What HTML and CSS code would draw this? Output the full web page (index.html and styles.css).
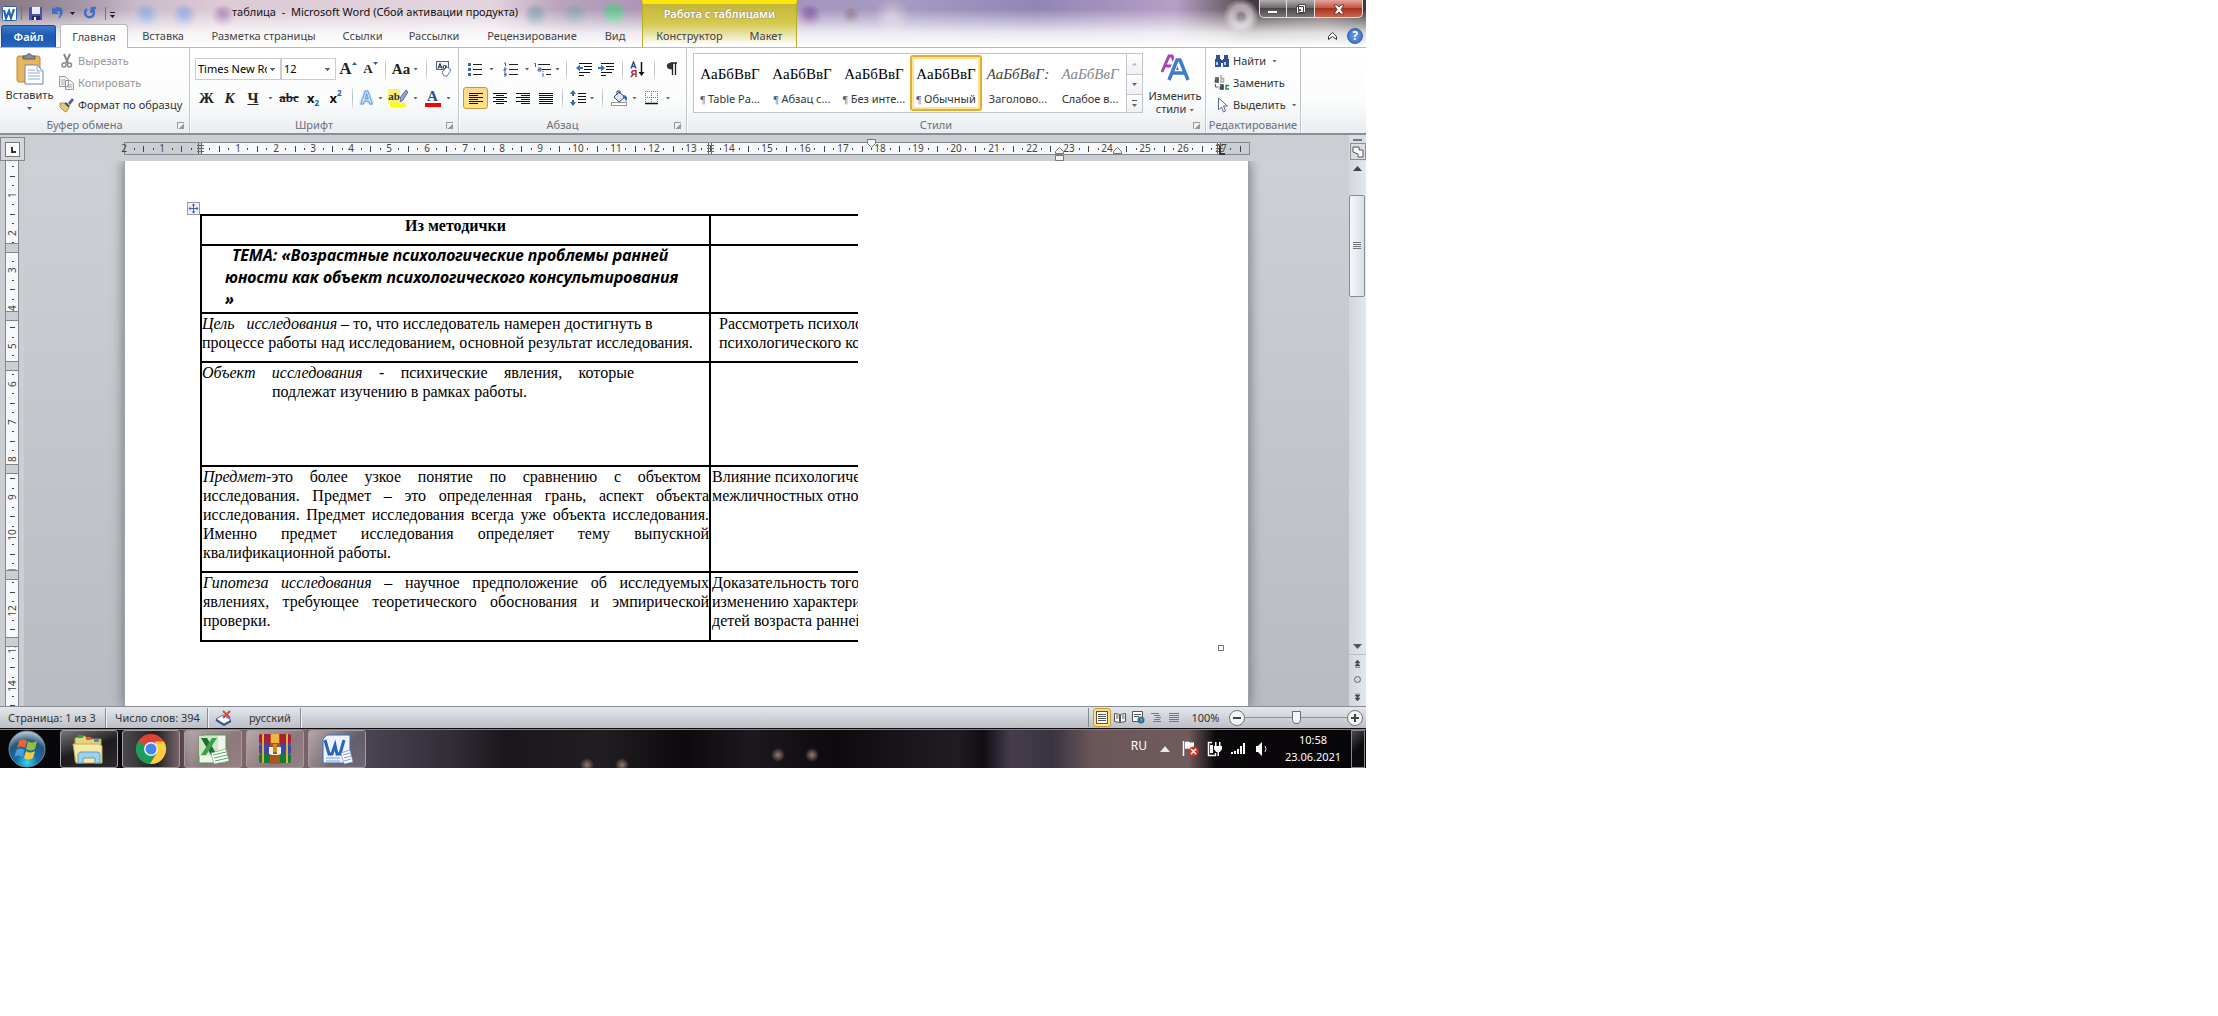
FILE: index.html
```html
<!DOCTYPE html>
<html lang="ru">
<head>
<meta charset="utf-8">
<title>таблица - Microsoft Word</title>
<link rel="stylesheet" href="styles.css">
</head>
<body>
<div class="window">
  <header class="head">
    <div class="titlebar">
      <svg class="qat" width="120" height="20" viewBox="0 0 120 20">
        <rect x="2.500" y="4.500" width="14" height="14" rx="1" fill="#fff" stroke="#2c62ae"/>
        <path d="M4 8l2 8 3-7 2 7 3-9" fill="none" stroke="#2467b9" stroke-width="2.200"/>
        <path d="M21.500 5v13M105.500 5v13" stroke="#77717f"/>
        <path d="M30 5h12v13H29V6z" fill="#4a4fb5"/><path d="M32 5h8v7h-8z" fill="#e9effa"/><path d="M32 14h8v4h-8z" fill="#252b72"/><path d="M34 15h2v3h-2z" fill="#fff"/>
        <path d="M52 5v7h7l-2.500-2.500c3-2 5 1 1.500 7.500 7-4 6-13-1-12-1.500.200-2.500 1-3 2z" fill="#3e6fc4"/>
        <path d="M70 10h5l-2.500 3zM110 13h5l-2.500 3zM110 10h5v1h-5z" fill="#1b1b1b"/>
        <path d="M87 7a4.500 4.500 0 1 0 5 0M91 11l1-5h4" fill="none" stroke="#3e6fc4" stroke-width="2.400"/>
      </svg>
      <span class="title">таблица&nbsp; -&nbsp; Microsoft Word (Сбой активации продукта)</span>
    </div>
    <nav class="tabs">
      <button class="tab file">Файл</button>
      <button class="tab active">Главная</button>
      <button class="tab">Вставка</button>
      <button class="tab">Разметка страницы</button>
      <button class="tab">Ссылки</button>
      <button class="tab">Рассылки</button>
      <button class="tab">Рецензирование</button>
      <button class="tab">Вид</button>
    </nav>
    <div class="context">
      <div class="context-title">Работа с таблицами</div>
      <div class="context-tabs"><button class="tab">Конструктор</button><button class="tab">Макет</button></div>
    </div>
    <div class="winbtns">
      <button aria-label="Свернуть"><svg width="14" height="14"><path d="M1.500 8.500h10v3h-10z" fill="#fff" stroke="#555"/></svg></button>
      <button aria-label="Развернуть"><svg width="14" height="14"><path d="M4.500 2.500h7v8h-7zM2.500 4.500h7v7h-7z" fill="#fff" stroke="#444"/><path d="M5 7h2v2H5z" fill="#555"/></svg></button>
      <button class="close" aria-label="Закрыть"><svg width="14" height="14"><path d="M2 3h3l2 2 2-2h3L9 7.500l3 4.500H9L7 10l-2 2H2l3-4.500z" fill="#fff" stroke="#5b2222" stroke-width=".8"/></svg></button>
    </div>
    <div class="helprow">
      <button aria-label="Свернуть ленту"><svg width="10" height="8"><path d="M.5 4.500l4-4 4 4v3l-4-3-4 3z" fill="#fff" stroke="#333"/></svg></button>
      <button class="help" aria-label="Справка">?</button>
    </div>
  </header>

  <section class="ribbon">
    <div class="group g-clip">
      <div class="clip">
        <button class="paste">
          <svg width="28" height="32" viewBox="0 0 28 32"><rect x="1" y="3" width="23" height="26" rx="2" fill="#e9b45c" stroke="#c2883a"/><path d="M7 6V3h3c1-3 5-3 6 0h3v3z" fill="#888f9a" stroke="#5c6069"/><path d="M9 12h12l6 6v13H9z" fill="#fff" stroke="#6c86b4"/><path d="M21 12v6h6M12 17h7M12 20h12M12 23h12M12 26h12" fill="none" stroke="#92abd4"/></svg>
          <span>Вставить</span><i class="arr"></i>
        </button>
        <div class="cliplist">
          <button class="off"><svg width="16" height="16"><path d="M5 1l4 9M11 1L7 10" stroke="#8a8a8a" stroke-width="2"/><circle cx="5" cy="12" r="2" fill="none" stroke="#8a8a8a" stroke-width="1.500"/><circle cx="10.500" cy="12" r="2" fill="none" stroke="#8a8a8a" stroke-width="1.500"/></svg>Вырезать</button>
          <button class="off"><svg width="16" height="16"><path d="M.5 1.500h6l3 3v7h-9zM6.500 5.500h5l3 3v6h-8z" fill="#f4f4f4" stroke="#999"/><path d="M2 5h5M2 7h4M2 9h4M8 10h5M8 12h5" stroke="#aaa"/></svg>Копировать</button>
          <button><svg width="16" height="16"><path d="M9 6l4-5 2 2-4 5z" fill="#5a5f9c"/><path d="M7 5l4 4-2 2-5-4z" fill="#555"/><path d="M1 6l4 0 5 5-3 4-2-1-4-4z" fill="#e8c878" stroke="#987528" stroke-width=".7"/></svg>Формат по образцу</button>
        </div>
      </div>
      <div class="glabel">Буфер обмена<i class="launch"></i></div>
    </div>

    <div class="group g-font">
      <div class="rows">
        <div class="row f1">
          <select aria-label="Шрифт"><option>Times New Roman</option></select>
          <select aria-label="Размер"><option>12</option></select>
          <button class="serif big">A<svg class="tip" width="5" height="4"><path d="M0 3h5L2.500 0z" fill="#3058a8"/></svg></button>
          <button class="serif mid">A<svg class="tip" width="5" height="4"><path d="M0 0h5L2.500 3z" fill="#3058a8"/></svg></button>
          <i class="sep"></i>
          <button class="serif">Aa<i class="arr"></i></button>
          <i class="sep"></i>
          <button aria-label="Очистить формат"><svg width="18" height="16"><rect x="1.500" y=".5" width="12" height="8" fill="#eef2fb" stroke="#4a66a0"/><path d="M3 7.500l2-5 2 5M4 6h2M11 4.500v3M11 6a1.500 1.500 0 1 0-3 0 1.500 1.500 0 1 0 3 0" fill="none" stroke="#222"/><path d="M7 11l5-5 4 3-4 6H9z" fill="#fff" stroke="#6b7898"/></svg></button>
        </div>
        <div class="row f2">
          <button class="serif">Ж</button>
          <button class="serif it">К</button>
          <button class="serif un">Ч</button>
          <i class="arr"></i>
          <button class="serif strike">abc</button>
          <button class="xx">x<sub>2</sub></button>
          <button class="xx">x<sup>2</sup></button>
          <i class="sep"></i>
          <button class="glow">A</button>
          <i class="arr"></i>
          <button class="bar yellow"><b>ab</b><svg width="8" height="12"><path d="M6 0l2 2-5 8-3 2V8z" fill="#8fa9d8" stroke="#33415f" stroke-width=".7"/></svg></button>
          <i class="arr"></i>
          <button class="bar red">A</button>
          <i class="arr"></i>
        </div>
      </div>
      <div class="glabel">Шрифт<i class="launch"></i></div>
    </div>

    <div class="group g-par">
      <div class="rows">
        <div class="row p1">
          <button aria-label="Маркеры"><svg width="14" height="14"><path d="M5 2.500h9M5 7.500h9M5 12.500h9" stroke="#222"/><path d="M0 1h3v3H0zM0 6h3v3H0zM0 11h3v3H0z" fill="#3b63b5"/></svg></button><i class="arr"></i>
          <button aria-label="Нумерация"><svg width="15" height="15"><path d="M6 2.500h9M6 7.500h9M6 12.500h9" stroke="#222"/><path d="M1 1h1.500v3M1 6h2v1.500H1V9h2M1 11h2v3H1M1 12.500h2" fill="none" stroke="#3b63b5"/></svg></button><i class="arr"></i>
          <button aria-label="Многоуровневый список"><svg width="17" height="15"><path d="M4 2.500h12M8 7.500h9M12 12.500h5" stroke="#222"/><path d="M0 1.500h1.500V5M4 6h3v3H4V7.500h3M9 9v1M9 11v4" fill="none" stroke="#3b63b5"/></svg></button><i class="arr"></i>
          <i class="sep"></i>
          <button aria-label="Уменьшить отступ"><svg width="16" height="14"><path d="M3 1.500h13M8 4.500h8M8 7.500h8M3 10.500h11M3 13.500h5" stroke="#111"/><path d="M0 6l4-3.500v2.500h3v2H4v2.500z" fill="#3b6fd0"/></svg></button>
          <button aria-label="Увеличить отступ"><svg width="16" height="14"><path d="M3 1.500h13M8 4.500h8M8 7.500h8M3 10.500h11M3 13.500h5" stroke="#111"/><path d="M7 6L3 2.500v2.500H0v2h3v2.500z" fill="#3b6fd0"/></svg></button>
          <i class="sep"></i>
          <button aria-label="Сортировка"><svg width="16" height="17"><path d="M1 7.500L3.500 1l2.500 6.500M2 5.500h3" fill="none" stroke="#2b4c9b" stroke-width="1.400"/><path d="M6 16V9.700H3.500a1.700 1.700 0 0 0 0 3.400H6M3.500 13L1 16" fill="none" stroke="#9c2d35" stroke-width="1.400"/><path d="M11.500 1v12" stroke="#111" stroke-width="1.500"/><path d="M8.500 11h6l-3 4z" fill="#111"/></svg></button>
          <i class="sep"></i>
          <button aria-label="Знаки абзаца"><svg width="11" height="14"><path d="M5 1h6M6.500 1v12M9.500 1v12" stroke="#222" stroke-width="1.300"/><path d="M6 .5v7c-7 0-7-7 0-7z" fill="#333"/></svg></button>
        </div>
        <div class="row p2">
          <button class="on" aria-label="По левому краю"><svg width="14" height="12"><path d="M0 1.500h14M0 3.500h9M0 5.500h14M0 7.500h9M0 9.500h14M0 11.500h9" stroke="#111"/></svg></button>
          <button aria-label="По центру"><svg width="14" height="12"><path d="M0 1.500h14M3 3.500h8M0 5.500h14M3 7.500h8M0 9.500h14M3 11.500h8" stroke="#111"/></svg></button>
          <button aria-label="По правому краю"><svg width="14" height="12"><path d="M0 1.500h14M5 3.500h9M0 5.500h14M5 7.500h9M0 9.500h14M5 11.500h9" stroke="#111"/></svg></button>
          <button aria-label="По ширине"><svg width="14" height="12"><path d="M0 1.500h14M0 3.500h14M0 5.500h14M0 7.500h14M0 9.500h14M0 11.500h14" stroke="#111"/></svg></button>
          <i class="sep"></i>
          <button aria-label="Интервал"><svg width="16" height="16"><path d="M8 3.500h8M8 6.500h8M8 9.500h8M8 12.500h8" stroke="#111"/><path d="M3 0l3 4H0zM3 16l3-4H0zM2 4h2v2H2zM2 10h2v2H2z" fill="#3b63b5"/></svg></button><i class="arr"></i>
          <i class="sep"></i>
          <button aria-label="Заливка"><svg width="17" height="16"><path d="M3 7l5-5 6 5-6 5z" fill="#dbe6f7" stroke="#33486f"/><path d="M6 5V1h3v3" fill="none" stroke="#33486f"/><path d="M12 5c4 0 5 3 3 7-1-3-1-4-3-4z" fill="#3b63b5"/><rect x=".5" y="12.500" width="15" height="3" fill="#fff" stroke="#999"/></svg></button><i class="arr"></i>
          <button aria-label="Границы"><svg width="14" height="14"><path d="M.5 0v13M12.500 0v13M6.500 0v13M0 .5h13M0 6.500h13" stroke="#777" stroke-dasharray="1 1"/><path d="M0 12.500h13" stroke="#111" stroke-width="1.500"/></svg></button><i class="arr"></i>
        </div>
      </div>
      <div class="glabel">Абзац<i class="launch"></i></div>
    </div>

    <div class="group g-style">
      <div class="stylebox">
        <div class="gallery">
          <button class="sty"><b>АаБбВвГ</b><span><em>¶</em> Table Pa...</span></button>
          <button class="sty"><b>АаБбВвГ</b><span><em>¶</em> Абзац с...</span></button>
          <button class="sty"><b>АаБбВвГ</b><span><em>¶</em> Без инте...</span></button>
          <button class="sty sel"><b>АаБбВвГ</b><span><em>¶</em> Обычный</span></button>
          <button class="sty h"><b>АаБбВвГ:</b><span>Заголово...</span></button>
          <button class="sty w"><b>АаБбВвГ</b><span>Слабое в...</span></button>
          <div class="gscroll">
            <button class="dis" aria-label="Вверх"><i class="arr up"></i></button>
            <button aria-label="Вниз"><i class="arr"></i></button>
            <button aria-label="Ещё"><i class="dash"></i><i class="arr"></i></button>
          </div>
        </div>
        <button class="change">
          <svg width="30" height="28" viewBox="0 0 30 28"><path d="M2 18L9 2h3l6 16M5 12h10" fill="none" stroke="#a844b4" stroke-width="3"/><path d="M9 26l8-21h3l8 21M12 19h12" fill="none" stroke="#fff" stroke-width="6"/><path d="M9 26l8-20h3l8 20M12 19h12" fill="none" stroke="#3f7ccb" stroke-width="3.500"/></svg>
          <span>Изменить</span><span>стили <i class="arr"></i></span>
        </button>
      </div>
      <div class="glabel">Стили<i class="launch"></i></div>
    </div>

    <div class="group g-edit">
      <div class="cliplist">
        <button><svg width="16" height="14"><path d="M2 1h4v4H2zM10 1h4v4h-4zM1 5h6v8H1zM9 5h6v8H9zM7 6h2v3H7z" fill="#2c4f96"/><path d="M2 8h2v3H2zM10 8h2v3h-2z" fill="#b9cdf0"/></svg>Найти <i class="arr"></i></button>
        <button><svg width="16" height="16"><g fill="none" stroke-width="1.500"><path d="M1 3h3v4H1.500V5H4" stroke="#444"/><path d="M7 0v7h2.500V3.500H7" stroke="#aaa"/><path d="M6 10h3v4H6.500v-2H9" stroke="#333"/><path d="M15 10.500h-3V14h3" stroke="#2a8a34"/></g><path d="M1.500 9v3h3" fill="none" stroke="#3b63b5"/></svg>Заменить</button>
        <button><svg width="16" height="16"><path d="M4.500 1v12l3-3 2 5 2-1-2-5h4z" fill="#fff" stroke="#5a6a8c"/></svg>Выделить <i class="arr"></i></button>
      </div>
      <div class="glabel">Редактирование</div>
    </div>
  </section>

  <div class="rulerbar">
    <button class="tabsel" aria-label="Табуляция"><i></i></button>
    <svg class="hruler" width="1132" height="27" id="hruler"></svg>
    <div class="rightcap"><i></i><button aria-label="Линейка"><svg width="12" height="12"><path d="M1 1h6v3h4v7H6V8L1 6z" fill="#fff" stroke="#555"/></svg></button></div>
  </div>

  <main class="work">
    <svg class="vruler" width="19" height="545" id="vruler"></svg>
    <div class="canvas">
      <div class="page">
        <div class="anchor"><svg width="13" height="13"><rect x=".5" y=".5" width="12" height="12" fill="#f0f2f6" stroke="#999"/><path d="M6.500 2v9M2 6.500h9" stroke="#3b63b5"/><path d="M6.500 1.500l2 2h-4zM6.500 11.500l2-2h-4zM1.500 6.500l2-2v4zM11.500 6.500l-2-2v4z" fill="#3b63b5"/></svg></div>
        <div class="clipbox">
          <table class="doc">
            <colgroup><col class="c1"><col class="c2"></colgroup>
            <tr class="r1"><th>Из методички</th><td></td></tr>
            <tr class="r2"><td><div class="theme"><p class="first">ТЕМА: «Возрастные психологические проблемы ранней</p><p>юности как объект психологического консультирования</p><p>»</p></div></td><td></td></tr>
            <tr class="r3"><td><p><em>Цель&nbsp;&nbsp; исследования</em> – то, что исследователь намерен достигнуть в</p><p>процессе работы над исследованием, основной результат исследования.</p></td><td><p class="in">Рассмотреть психоло</p><p class="in">психологического ко</p></td></tr>
            <tr class="r4"><td><p class="j narrow"><em>Объект исследования</em> - психические явления, которые</p><p class="hang">подлежат изучению в рамках работы.</p></td><td></td></tr>
            <tr class="r5"><td><p class="j short"><em>Предмет</em>-это более узкое понятие по сравнению с объектом</p><p class="j">исследования. Предмет – это определенная грань, аспект объекта</p><p class="j">исследования. Предмет исследования всегда уже объекта исследования.</p><p class="j">Именно предмет исследования определяет тему выпускной</p><p>квалификационной работы.</p></td><td><p>Влияние психологиче</p><p>межличностных отно</p></td></tr>
            <tr class="r6"><td><p class="j"><em>Гипотеза исследования</em> – научное предположение об исследуемых</p><p class="j">явлениях, требующее теоретического обоснования и эмпирической</p><p>проверки.</p></td><td><p>Доказательность того</p><p>изменению характери</p><p>детей возраста ранней</p></td></tr>
          </table>
        </div>
        <i class="endmark"></i>
      </div>
    </div>
    <div class="vscroll">
      <svg width="17" height="34"><path d="M4 10h9L8.500 5z" fill="#444"/></svg>
      <div class="thumb"><i></i></div>
      <svg class="down" width="17" height="66"><path d="M4 4h9l-4.500 5z" fill="#555"/><path d="M0 14.500h17" stroke="#b9bfc9"/><path d="M6 23h5L8.500 20zM6 26h5L8.500 23zM6 27.500h5" fill="#444" stroke="#444" stroke-width=".5"/><circle cx="8.500" cy="39.500" r="3" fill="#d5d9df" stroke="#666"/><path d="M6 55h5l-2.500 3zM6 58h5l-2.500 3zM6 54h5" fill="#444" stroke="#444" stroke-width=".5"/></svg>
    </div>
  </main>

  <footer class="status">
    <span class="st s1">Страница: 1 из 3</span>
    <span class="st s2">Число слов: 394</span>
    <span class="st s3"><svg width="18" height="16"><path d="M1 9l7-4 8 5-7 4z" fill="#fff" stroke="#4a66a8"/><path d="M1 10l8 5 7-4" fill="none" stroke="#3556a0" stroke-width="2"/><path d="M8 1l7 7M15 1L8 8" stroke="#e2442c" stroke-width="2"/></svg>русский</span>
    <div class="views">
      <button class="on" aria-label="Разметка"><svg width="13" height="13"><rect x=".5" y=".5" width="11" height="12" fill="#fff" stroke="#555"/><path d="M2 3.500h8M2 5.500h8M2 7.500h8M2 9.500h8" stroke="#555"/></svg></button>
      <button aria-label="Чтение"><svg width="13" height="12"><path d="M.5 1.500l5 1v8l-5-1zM11.500 1.500l-5 1v8l5-1z" fill="#fff" stroke="#555"/><path d="M2 4h2.500M2 6h2.500M8 4h2.500M8 6h2.500" stroke="#555"/></svg></button>
      <button aria-label="Веб"><svg width="13" height="13"><path d="M.5.5h10v10H.5z" fill="#fff" stroke="#555"/><path d="M2 3.500h7M2 5.500h5" stroke="#555"/><circle cx="9" cy="9" r="3.500" fill="#2e70a8"/><path d="M8 7l3 1-2 3z" fill="#6bb26a"/></svg></button>
      <button aria-label="Структура"><svg width="11" height="10"><path d="M0 .5h8M3 2.500h6M5 4.500h5M3 6.500h6M2 8.500h8" stroke="#777"/></svg></button>
      <button aria-label="Черновик"><svg width="11" height="10"><path d="M0 .5h10M0 2.500h10M0 4.500h10M0 6.500h10M0 8.500h10" stroke="#777"/></svg></button>
    </div>
    <span class="pct">100%</span>
    <div class="zoom">
      <button aria-label="Уменьшить"><i></i></button>
      <input type="range" min="0" max="100" value="50" aria-label="Масштаб">
      <button class="plus" aria-label="Увеличить"><i></i></button>
    </div>
  </footer>

  <div class="taskbar">
    <button class="start" aria-label="Пуск"><svg width="38" height="38" viewBox="0 0 38 38"><defs><radialGradient id="orb" cx="50%" cy="88%" r="85%"><stop offset="0" stop-color="#35d8f8"/><stop offset=".35" stop-color="#1570a8"/><stop offset=".7" stop-color="#27557c"/><stop offset="1" stop-color="#b4c8d4"/></radialGradient></defs><circle cx="19" cy="19" r="18" fill="url(#orb)" stroke="#6d8ea2"/><path d="M11 11c3-2 5-2 8 0l-2 7c-3-2-5-2-8 0z" fill="#ea6430"/><path d="M20 11c3 2 5 2 9 0l-2 8c-3 2-6 2-9 0z" fill="#92bf3e"/><path d="M8.500 20c3-2 5-2 8 0l-2 7c-3-2-5-2-8 0z" fill="#4d9ddc"/><path d="M18 21c3 2 5 2 9 0l-2 7c-3 2-6 2-9 0z" fill="#fbc937"/></svg></button>
    <button class="task dark" aria-label="Проводник"><svg width="34" height="34" viewBox="0 0 34 34"><path d="M3 6l10-2 2 3h14v22H3z" fill="#e9d27c" stroke="#b79b45"/><path d="M1 12h26l3 2v17H4z" fill="#f7e9a8" stroke="#c6ab56"/><path d="M6 3h5v3H6z" fill="#22a847"/><path d="M14 5h5v3h-5z" fill="#e35c2c"/><path d="M22 7h5v3h-5z" fill="#3b8fdc"/><path d="M6 31v-9q1-2 3-2h16q3 0 3 2v9h-5v-5H11v5z" fill="#9bd3ee" stroke="#5d9fbe"/></svg></button>
    <button class="task half" aria-label="Chrome"><svg width="32" height="32" viewBox="0 0 32 32"><circle cx="16" cy="16" r="15" fill="#dc4437"/><path d="M3 8.500A15 15 0 0 0 15 31l7-12-6-3z" fill="#1a9f5b"/><path d="M29 8.500A15 15 0 0 1 15 31l7-11.500L20 8.500z" fill="#fdce41"/><circle cx="16" cy="16" r="7" fill="#f1f1f1"/><circle cx="16" cy="16" r="5.500" fill="#4485f2"/></svg></button>
    <button class="task" aria-label="Excel"><svg width="32" height="32" viewBox="0 0 32 32"><path d="M6 2h23v28H2V6z" fill="#eef6ea" stroke="#4a9a4c"/><path d="M2 3h19v20H2z" fill="#cfe7c6"/><path d="M4 5h6l10 17h-6z" fill="#1c6f2e"/><path d="M20 5h-5L4 22h5z" fill="#3da14a"/><path d="M14 20l15-4 3 12-15 3z" fill="#fff" stroke="#6ca070" stroke-width=".7"/><path d="M16 22l13-3M17 25l13-3M18 28l13-3" stroke="#5aa35e"/></svg></button>
    <button class="task" aria-label="WinRAR"><svg width="32" height="32" viewBox="0 0 32 32"><rect y="1" width="32" height="10" rx="2" fill="#a81f3c"/><rect y="11" width="32" height="10" rx="2" fill="#4145a8"/><rect y="21" width="32" height="9" rx="2" fill="#15793a"/><path d="M3 1h2v29H3zM27 1h2v29h-2z" fill="#d9b23d"/><path d="M11 1h10v30H11z" fill="#a95621"/><path d="M12 1h8v9h-8z" fill="#f0b540"/><path d="M10 14h4v7h4v-7h4v7l-3 1h-6l-3-1z" fill="#f4f0e6"/><path d="M14 11h4v8h-4z" fill="#cf8a28"/></svg></button>
    <button class="task blue" aria-label="Word"><svg width="32" height="32" viewBox="0 0 32 32"><path d="M6 2h23v28H2V6z" fill="#eef3fb" stroke="#3c6db5"/><path d="M4 7l4 14h3l3-9 2 9h3l4-14" fill="none" stroke="#2564b8" stroke-width="3"/><path d="M20 20l9-3 3 12-9 2z" fill="#fff" stroke="#6c8ac0" stroke-width=".7"/><path d="M22 22l7-2M23 25l7-2M23 28l7-2M5 25h14M5 28h14" stroke="#7ba0d8"/></svg></button>
    <div class="tray">
      <span class="lang">RU</span>
      <svg class="more" width="10" height="6"><path d="M0 6h10L5 0z" fill="#e8e8e8"/></svg>
      <svg width="17" height="17"><path d="M1.500 1v15" stroke="#fff" stroke-width="1.500"/><path d="M3 2c4-2 5 2 9 0v7c-4 2-5-2-9 0z" fill="#fff"/><circle cx="11.500" cy="11.500" r="5" fill="#d8302a"/><path d="M9 9l5 5M14 9l-5 5" stroke="#fff" stroke-width="1.500"/></svg>
      <svg width="16" height="16"><path d="M5 1.500H1.500v13h7V12" fill="none" stroke="#fff" stroke-width="1.500"/><path d="M3 4h3v8H3z" fill="#fff"/><path d="M7 5h8v3l-2 3H9L7 8zM8 1h1.500v4H8zM12 1h1.500v4H12zM10.500 11h1.500v4h-1.500z" fill="#fff"/></svg>
      <svg width="16" height="13"><path d="M0 10h2v2H0zM3 9h2v3H3zM6 7h2v5H6zM9 4h2v8H9zM12 1h2v11h-2z" fill="#fff"/></svg>
      <svg width="16" height="16"><path d="M1 5h2l4-4v14l-4-4H1z" fill="#fff"/><path d="M10 5q2 3 0 6" fill="none" stroke="#ddd"/></svg>
      <div class="clock"><span>10:58</span><span>23.06.2021</span></div>
      <button class="desk" aria-label="Показать рабочий стол"></button>
    </div>
  </div>
</div>
<script src="rulers.js"></script>
</body>
</html>
```
FILE: styles.css
```css
* { box-sizing: border-box; }
body { margin: 0; background: #fff; color: #333; font: 11px/16px "Noto Sans", "Open Sans", sans-serif; }
button { margin: 0; padding: 0; border: 0; background: none; color: inherit; font: inherit; display: flex; align-items: center; justify-content: center; white-space: nowrap; }
svg { display: block; flex: none; }
p { margin: 0; }
.window { width: 100%; max-width: 1366px; overflow: hidden; }

.head {
  display: grid; grid-template: 24px 23px / 642px 155px 1fr; border-bottom: 1px solid #b6babf;
  background:
    linear-gradient(#fff0 20%, #fffc 70%, #fff 100%),
    radial-gradient(circle 7px at 1241px 17px, #6f6670 40%, #6f667000),
    radial-gradient(circle 18px at 1241px 16px, #b3a6b0 60%, #b3a6b000),
    radial-gradient(circle 13px at 146px 16px, #8fa7dd 20%, #8fa7dd00),
    radial-gradient(circle 13px at 184px 16px, #8fa7dd 20%, #8fa7dd00),
    radial-gradient(circle 12px at 223px 16px, #ab83ba 20%, #ab83ba00),
    radial-gradient(circle 13px at 536px 16px, #8b9fb0 30%, #8b9fb000),
    radial-gradient(circle 13px at 575px 16px, #8b9fb0 30%, #8b9fb000),
    radial-gradient(circle 13px at 614px 14px, #69bd91 50%, #69bd9100),
    radial-gradient(circle 12px at 810px 16px, #8055a0 20%, #8055a000),
    radial-gradient(circle 9px at 851px 16px, #8c6f8a 20%, #8c6f8a00),
    radial-gradient(circle 18px at 892px 16px, #c8bbd2 20%, #c8bbd200),
    linear-gradient(90deg, #857783, #a595a8 6%, #c9bac9 10%, #dccad5 16%, #e3d5df 36%, #b9a3bd 41%, #a68fb3 50%, #a59bc4 66%, #9185b5 76%, #b79fc6 86%, #6b6068 90%, #3c3539 91%, #6e6264 97%, #3b3739);
}
.titlebar { display: flex; align-items: center; }
.title { margin-left: 112px; color: #111; white-space: nowrap; }
.tabs { display: grid; grid-template-columns: 56px 68px 70px 131px 67px 76px 120px 46px; grid-row: 2; }
.tab { color: #444; }
.file { margin: 1px 0 0 1px; background: linear-gradient(#3a78cf, #1c58ae 50%, #2567c2); color: #fff; border: 1px solid #1c4a94; border-bottom: 0; border-radius: 3px 3px 0 0; font-weight: 600; }
.tabs .active { margin: 0 0 -1px 4px; width: 68px; background: #fff; border: 1px solid #b6babf; border-bottom: 0; border-radius: 3px 3px 0 0; z-index: 1; }
.tabs .tab:nth-child(n+3) { margin-left: 8px; }
.context { grid-column: 2; grid-row: 1 / 3; border: solid #b5ab2e; border-width: 0 1px; border-top: 4px solid #fde70c; background: linear-gradient(#c4b63b, #d6c94f 45%, #fffc 95%); }
.context-title { height: 20px; line-height: 20px; text-align: center; color: #fff; font-weight: 600; text-shadow: 0 0 2px #777; }
.context-tabs { display: grid; grid-template-columns: 93px 60px; height: 23px; }
.winbtns { grid-column: 3; grid-row: 1; display: flex; justify-self: end; margin-right: 3px; height: 18px; }
.winbtns button { width: 28px; border: 1px solid #ddd; border-top: 0; background: linear-gradient(#b3aeb0, #6e696b 45%, #4a4547 50%, #7a7577); border-radius: 0 0 0 5px; }
.winbtns button + button { border-left: 0; border-radius: 0; }
.winbtns .close { width: 48px; background: linear-gradient(#e2a69b, #c45646 45%, #a9301c 50%, #cc6650); border-radius: 0 0 5px 0; }
.helprow { grid-column: 3; grid-row: 2; display: flex; justify-content: flex-end; align-items: center; gap: 9px; padding-right: 3px; }
.help { width: 16px; height: 16px; border-radius: 50%; background: radial-gradient(#6d9ee6, #2e64bd); color: #fff; font-weight: 700; font-size: 12px; border: 1px solid #2f5ea8; }

.ribbon { display: flex; height: 87px; border-bottom: 2px solid #8a8f95; background: linear-gradient(#fff, #fbfcfc 60%, #eceff2 95%); }
.group { display: flex; flex-direction: column; justify-content: space-between; border-right: 1px solid #c3c7cc; box-shadow: 1px 0 #fff; }
.g-clip { width: 190px; }
.g-font { width: 269px; }
.g-par { width: 228px; }
.g-style { width: 519px; }
.g-edit { width: 95px; }
.glabel { position: relative; height: 18px; line-height: 20px; text-align: center; color: #6b6f7a; padding-right: 20px; white-space: nowrap; }
.g-edit .glabel { padding: 0; }
.launch { position: absolute; right: 5px; top: 7px; width: 7px; height: 7px; border: solid #999; border-width: 1px 0 0 1px; background: linear-gradient(135deg, #fff0 55%, #999 55%); }
.arr { display: inline-block; width: 5px; height: 3px; background: #666; clip-path: polygon(0 0, 100% 0, 50% 100%); flex: none; align-self: center; justify-self: center; vertical-align: middle; }
.arr.up { clip-path: polygon(0 100%, 100% 100%, 50% 0); }
.sep { width: 1px; height: 20px; background: linear-gradient(#dfe2e6, #b5bac2, #dfe2e6); justify-self: center; align-self: center; }
.clip { display: flex; padding-top: 5px; }
.paste { flex-direction: column; justify-content: flex-start; width: 59px; }
.paste span { margin: 2px 0 4px; }
.cliplist { display: flex; flex-direction: column; gap: 6px; }
.cliplist button { justify-content: flex-start; gap: 3px; height: 16px; }
.off { color: #999; }
.g-edit .cliplist { padding: 5px 0 0 8px; }
.g-edit .arr { margin-left: 3px; }
.rows { display: flex; flex-direction: column; gap: 7px; padding: 10px 0 0 5px; }
.g-par .rows { padding-left: 4px; }
.row { display: grid; height: 22px; }
.f1 { grid-template-columns: 86px 55px 24px 21px 9px 30px 12px 24px; }
.f2 { grid-template-columns: 23px 23px 24px 11px 26px 22px 23px 10px 19px 9px 26px 9px 25px 7px; }
.p1 { grid-template-columns: 24px 9px 28px 6px 25px 5px 13px 22px 22px 10px 21px 13px 20px; }
.p2 { grid-template-columns: 25px 23px 23px 23px 10px 21px 8px 12px 22px 9px 25px 8px; }
select { appearance: none; margin: 0; width: 100%; height: 22px; padding: 0 13px 0 2px; border: 1px solid #c9ccd1; border-radius: 0; font: inherit; color: #000; text-overflow: clip; background: linear-gradient(#666, #666) right 5px top 9px / 5px 1px no-repeat, linear-gradient(#666, #666) right 6px top 10px / 3px 1px no-repeat, linear-gradient(#666, #666) right 7px top 11px / 1px 1px no-repeat, #fff; }
.serif { font: 700 15px/20px "Liberation Serif", serif; color: #222; gap: 3px; }
.big { font-size: 17px; gap: 0; }
.mid { font-size: 13px; gap: 0; }
.tip { align-self: flex-start; margin-top: 4px; }
.it { font-style: italic; }
.un { text-decoration: underline; }
.strike { text-decoration: line-through; font-size: 13px; }
.xx { font-weight: 700; font-size: 13px; color: #111; }
.xx sub, .xx sup { font-size: 8px; line-height: 8px; color: #2b58b0; }
.xx sub { align-self: flex-end; margin-bottom: 2px; }
.xx sup { align-self: flex-start; margin-top: 2px; }
.glow { font-weight: 600; font-size: 17px; color: #fff; -webkit-text-stroke: 1px #5b9bd8; text-shadow: 0 0 3px #6fb2ee; }
.bar { align-self: center; justify-self: center; width: 16px; height: 18px; font: 700 15px/14px "Liberation Serif", serif; color: #2f4c8c; border-bottom: 4px solid #f00; }
.yellow { border-color: #ff0; }
.yellow b { font-size: 11px; background: #f5f078; color: #333; }
.on { border: 1px solid #c29a3e; border-radius: 3px; background: linear-gradient(#fcd88b, #ffe685); }

.stylebox { display: flex; gap: 5px; padding: 5px 0 0 6px; }
.gallery { display: flex; height: 60px; border: 1px solid #c1c5ca; background: #fff; width: 450px; }
.sty { width: 72px; flex-direction: column; justify-content: space-between; padding: 10px 0 5px; flex: none; }
.sty b { font: 400 15px/20px "Liberation Serif", serif; color: #000; }
.sty span { color: #333; }
.sty em { font-style: normal; font-family: "Liberation Serif", serif; color: #56598a; }
.sel { border: 2px solid #e3ad35; border-radius: 3px; box-shadow: inset 0 0 0 2px #ffe48b; margin: 1px 0; padding: 7px 0 2px; }
.h b { font-style: italic; color: #444; }
.w b { font-style: italic; color: #888; }
.gscroll { display: grid; grid-template-rows: 20px 20px 18px; width: 16px; border-left: 1px solid #c1c5ca; }
.gscroll button { flex-direction: column; gap: 3px; background: linear-gradient(#fff, #eef0f3); }
.gscroll button + button { border-top: 1px solid #c1c5ca; }
.dis .arr { background: #bbb; }
.dash { width: 5px; height: 1px; background: #555; }
.change { flex-direction: column; justify-content: flex-start; width: 54px; padding-top: 1px; }
.change span { line-height: 13px; }
.change svg { margin-bottom: 7px; }

.rulerbar { display: flex; height: 26px; background: #cbced3; }
.tabsel { width: 25px; height: 24px; margin: 2px 93px 0 0; border: 1px solid #83878c; background: #d3d7db; }
.tabsel i { width: 15px; height: 15px; border: 1px solid #777; background: linear-gradient(#333, #333) 5px 4px / 2px 6px no-repeat, linear-gradient(#333, #333) 5px 8px / 5px 2px no-repeat, #fafafa; }
.rightcap { margin-left: auto; width: 17px; background: #d9dde4; display: flex; flex-direction: column; align-items: center; gap: 2px; padding-top: 4px; }
.rightcap > i { width: 9px; height: 2px; background: #777; }
.rightcap button { width: 16px; height: 17px; border: 1px solid #8a8e94; }
.hruler text, .vruler text { font-size: 10px; fill: #444; text-anchor: middle; }

.work { display: flex; background: linear-gradient(#cdd1d5, #b8bbc0); }
.vruler { background: #cbced3; }
.canvas { flex: 1; padding: 0 100px; margin-left: 5px; box-shadow: -5px 0 #cbced3; }
.page { position: relative; min-height: 545px; padding: 53px 0 0 75px; background: #fff; border: solid #9da2a8; border-width: 0 1px; box-shadow: 0 0 12px #6b6f75; clip-path: inset(0 -14px); }
.anchor { position: absolute; left: 62px; top: 41px; }
.clipbox { width: 658px; overflow: hidden; }
.doc { table-layout: fixed; width: 760px; border-collapse: collapse; color: #000; font: 16px/19px "Liberation Serif", serif; }
.c1 { width: 509px; }
.doc td, .doc th { border: 2px solid #000; padding: 0; vertical-align: top; white-space: nowrap; }
.doc p { padding-left: 1px; }
.doc .r3 p, .doc .r4 p { padding-left: 0; }
.r1 { height: 30px; }
.r2 { height: 68px; }
.r3 { height: 49px; }
.r4 { height: 104px; }
.r5 { height: 106px; }
.r6 { height: 69px; }
.theme { margin-top: -2px; padding-left: 22px; font: italic 700 16px/22px "Noto Sans", sans-serif; }
.doc .theme .first { padding-left: 8px; }
.doc .j { white-space: normal; text-align: justify; text-align-last: justify; }
.doc .narrow { width: 432px; }
.doc .r4 .hang { padding-left: 70px; }
.doc .short { width: 499px; }
.doc .r3 .in { padding-left: 8px; }
.endmark { position: absolute; right: 24px; bottom: 55px; width: 6px; height: 6px; border: 1px solid #777; }
.vscroll { width: 17px; background: linear-gradient(90deg, #d2d6de, #e3e7ee); display: flex; flex-direction: column; }
.thumb { height: 102px; margin-right: 1px; border: 1px solid #868c98; border-radius: 2px; background: linear-gradient(90deg, #f5f7fa, #dadfe8); display: grid; place-items: center; }
.thumb i { width: 8px; height: 8px; background: repeating-linear-gradient(#777 0 1px, #fff0 1px 2px); }
.down { margin-top: auto; }

.status { display: flex; align-items: center; height: 22px; border-top: 1px solid #868b94; background: linear-gradient(#e4e8ec, #bcc0c6); color: #333; white-space: nowrap; }
.st { display: flex; align-items: center; height: 20px; border-right: 1px solid #868b94; box-shadow: 1px 0 #eee; }
.s1 { width: 106px; padding-left: 8px; }
.s2 { width: 102px; padding-left: 9px; }
.s3 { width: 93px; padding-left: 7px; gap: 16px; }
.views { display: flex; align-items: center; margin-left: auto; border-left: 1px solid #868b94; padding-left: 4px; }
.views button { width: 18px; height: 19px; }
.pct { width: 45px; text-align: center; }
.zoom { display: flex; align-items: center; width: 138px; padding: 0 3px 0 1px; }
.zoom button { width: 16px; height: 16px; flex: none; border: 1px solid #6f747c; border-radius: 50%; background: #f2f4f6; }
.zoom i { width: 8px; height: 2px; background: #444; }
.zoom .plus i { height: 8px; background: linear-gradient(#444, #444) center / 2px 8px no-repeat, linear-gradient(#444, #444) center / 8px 2px no-repeat; }
.zoom input { appearance: none; flex: 1; min-width: 0; margin: 0; height: 16px; background: linear-gradient(#8c9199, #8c9199) center / 100% 1px no-repeat; }
.zoom input::-webkit-slider-thumb { appearance: none; width: 9px; height: 13px; background: #f5f6f8; border: 1px solid #666b74; border-radius: 1px 1px 5px 5px; }

.taskbar {
  display: flex; height: 40px; padding-left: 8px; border-top: 1px solid #0e0c10; box-shadow: inset 0 1px #857a88;
  background:
    radial-gradient(circle 7px at 587px 36px, #8c7069 10%, #8c706900),
    radial-gradient(circle 7px at 622px 36px, #8c7069 10%, #8c706900),
    radial-gradient(circle 7px at 778px 26px, #8c7069 10%, #8c706900),
    radial-gradient(circle 7px at 812px 26px, #8c7069 10%, #8c706900),
    linear-gradient(90deg, #070609, #0b090c 12%, #7d6569 14%, #7d6569 22%, #4e4655 26%, #332d38 33%, #19171b 37%, #211e22 44%, #0d0a0e 50%, #1c191e 55%, #0d0a0e 61%, #211c22 70%, #100d13 72%, #453d4d 74%, #3a3340 77%, #6b575a 80%, #6f5b5b 87%, #0b080b 89%, #060507);
}
.start { width: 38px; margin-right: 14px; }
.task { width: 58px; height: 38px; margin: 1px 4px 0 0; border: 1px solid #a59ca2; border-radius: 3px; background: linear-gradient(135deg, #ffffff70, #ffffff20 60%, #ffffff30); }
.dark { background: linear-gradient(160deg, #777, #1c1b1e 50%, #2c2a2e); }
.half { background: linear-gradient(90deg, #4a494c, #222 60%, #786468); }
.tray { display: flex; align-items: center; margin-left: auto; color: #fff; gap: 8px; }
.lang { margin: 0 5px 6px 0; font-size: 12px; }
.more { margin-right: 4px; }
.clock { display: flex; flex-direction: column; align-items: center; gap: 1px; margin-left: 4px; width: 60px; }
.desk { width: 14px; height: 38px; border: 1px solid #8a868c; background: linear-gradient(135deg, #4b494d, #0b0a0c 50%); margin: 0 1px 0 0; }
```
FILE: rulers.js
```js
// One centimetre of the document at 100 % zoom
const CM = 37.8;

function label(x, y, n, turn) {
  return `<text x="${x}" y="${y}"${turn ? ` transform="rotate(-90 ${x} ${y})"` : ''}>${n}</text>`;
}

function horizontal() {
  const zero = 82;
  let s = '<rect x="6.500" y="7.500" width="1125" height="12" fill="#cbced3" stroke="#83878c"/><rect x="83" y="8" width="1019" height="11" fill="#f7f8f9"/>';
  for (let q = -8; q <= 110; q++) {
    const x = Math.round(zero + q * CM / 4);
    if (q % 4 === 0) { if (q) s += label(x, 17, Math.abs(q / 4)); }
    else if (q % 2 === 0) s += `<rect x="${x}" y="11" width="1" height="6" fill="#444"/>`;
    else s += `<rect x="${x}" y="13" width="1" height="2" fill="#444"/>`;
  }
  for (const x of [79, 589, 1098]) {
    s += `<path d="M${x + 1.5} 8v11M${x + 4.5} 8v11M${x} 10.500h7M${x} 13.500h7M${x} 16.500h7" stroke="#666"/>`;
  }
  s += '<path d="M749.500 4.500h8v4l-4 4-4-4zM937.500 18.500v-2l4-4 4 4v2zM937.500 20.500h8v5h-8zM995.500 18.500v-2l4-4 4 4v2z" fill="#f2f2f2" stroke="#777"/>';
  s += '<path d="M1101 11h2v7h4v2h-6z" fill="#333"/>';
  document.getElementById('hruler').innerHTML = s;
}

function vertical() {
  const zero = -4;
  let s = '<rect x="5.500" y="-1" width="13" height="550" fill="#f7f8f9" stroke="#83878c"/>';
  for (let q = 1; q <= 58; q++) {
    const y = Math.round(zero + q * CM / 4);
    if (q % 4 === 0) s += label(16, y, q / 4, true);
    else if (q % 2 === 0) s += `<rect x="10" y="${y}" width="5" height="1" fill="#444"/>`;
    else s += `<rect x="12" y="${y}" width="2" height="1" fill="#444"/>`;
  }
  for (const y of [82, 150, 200, 303, 409, 476]) {
    s += `<rect x="5.500" y="${y + 0.5}" width="13" height="9" fill="#cbced3" stroke="#83878c"/>`;
  }
  document.getElementById('vruler').innerHTML = s;
}

horizontal();
vertical();
```
